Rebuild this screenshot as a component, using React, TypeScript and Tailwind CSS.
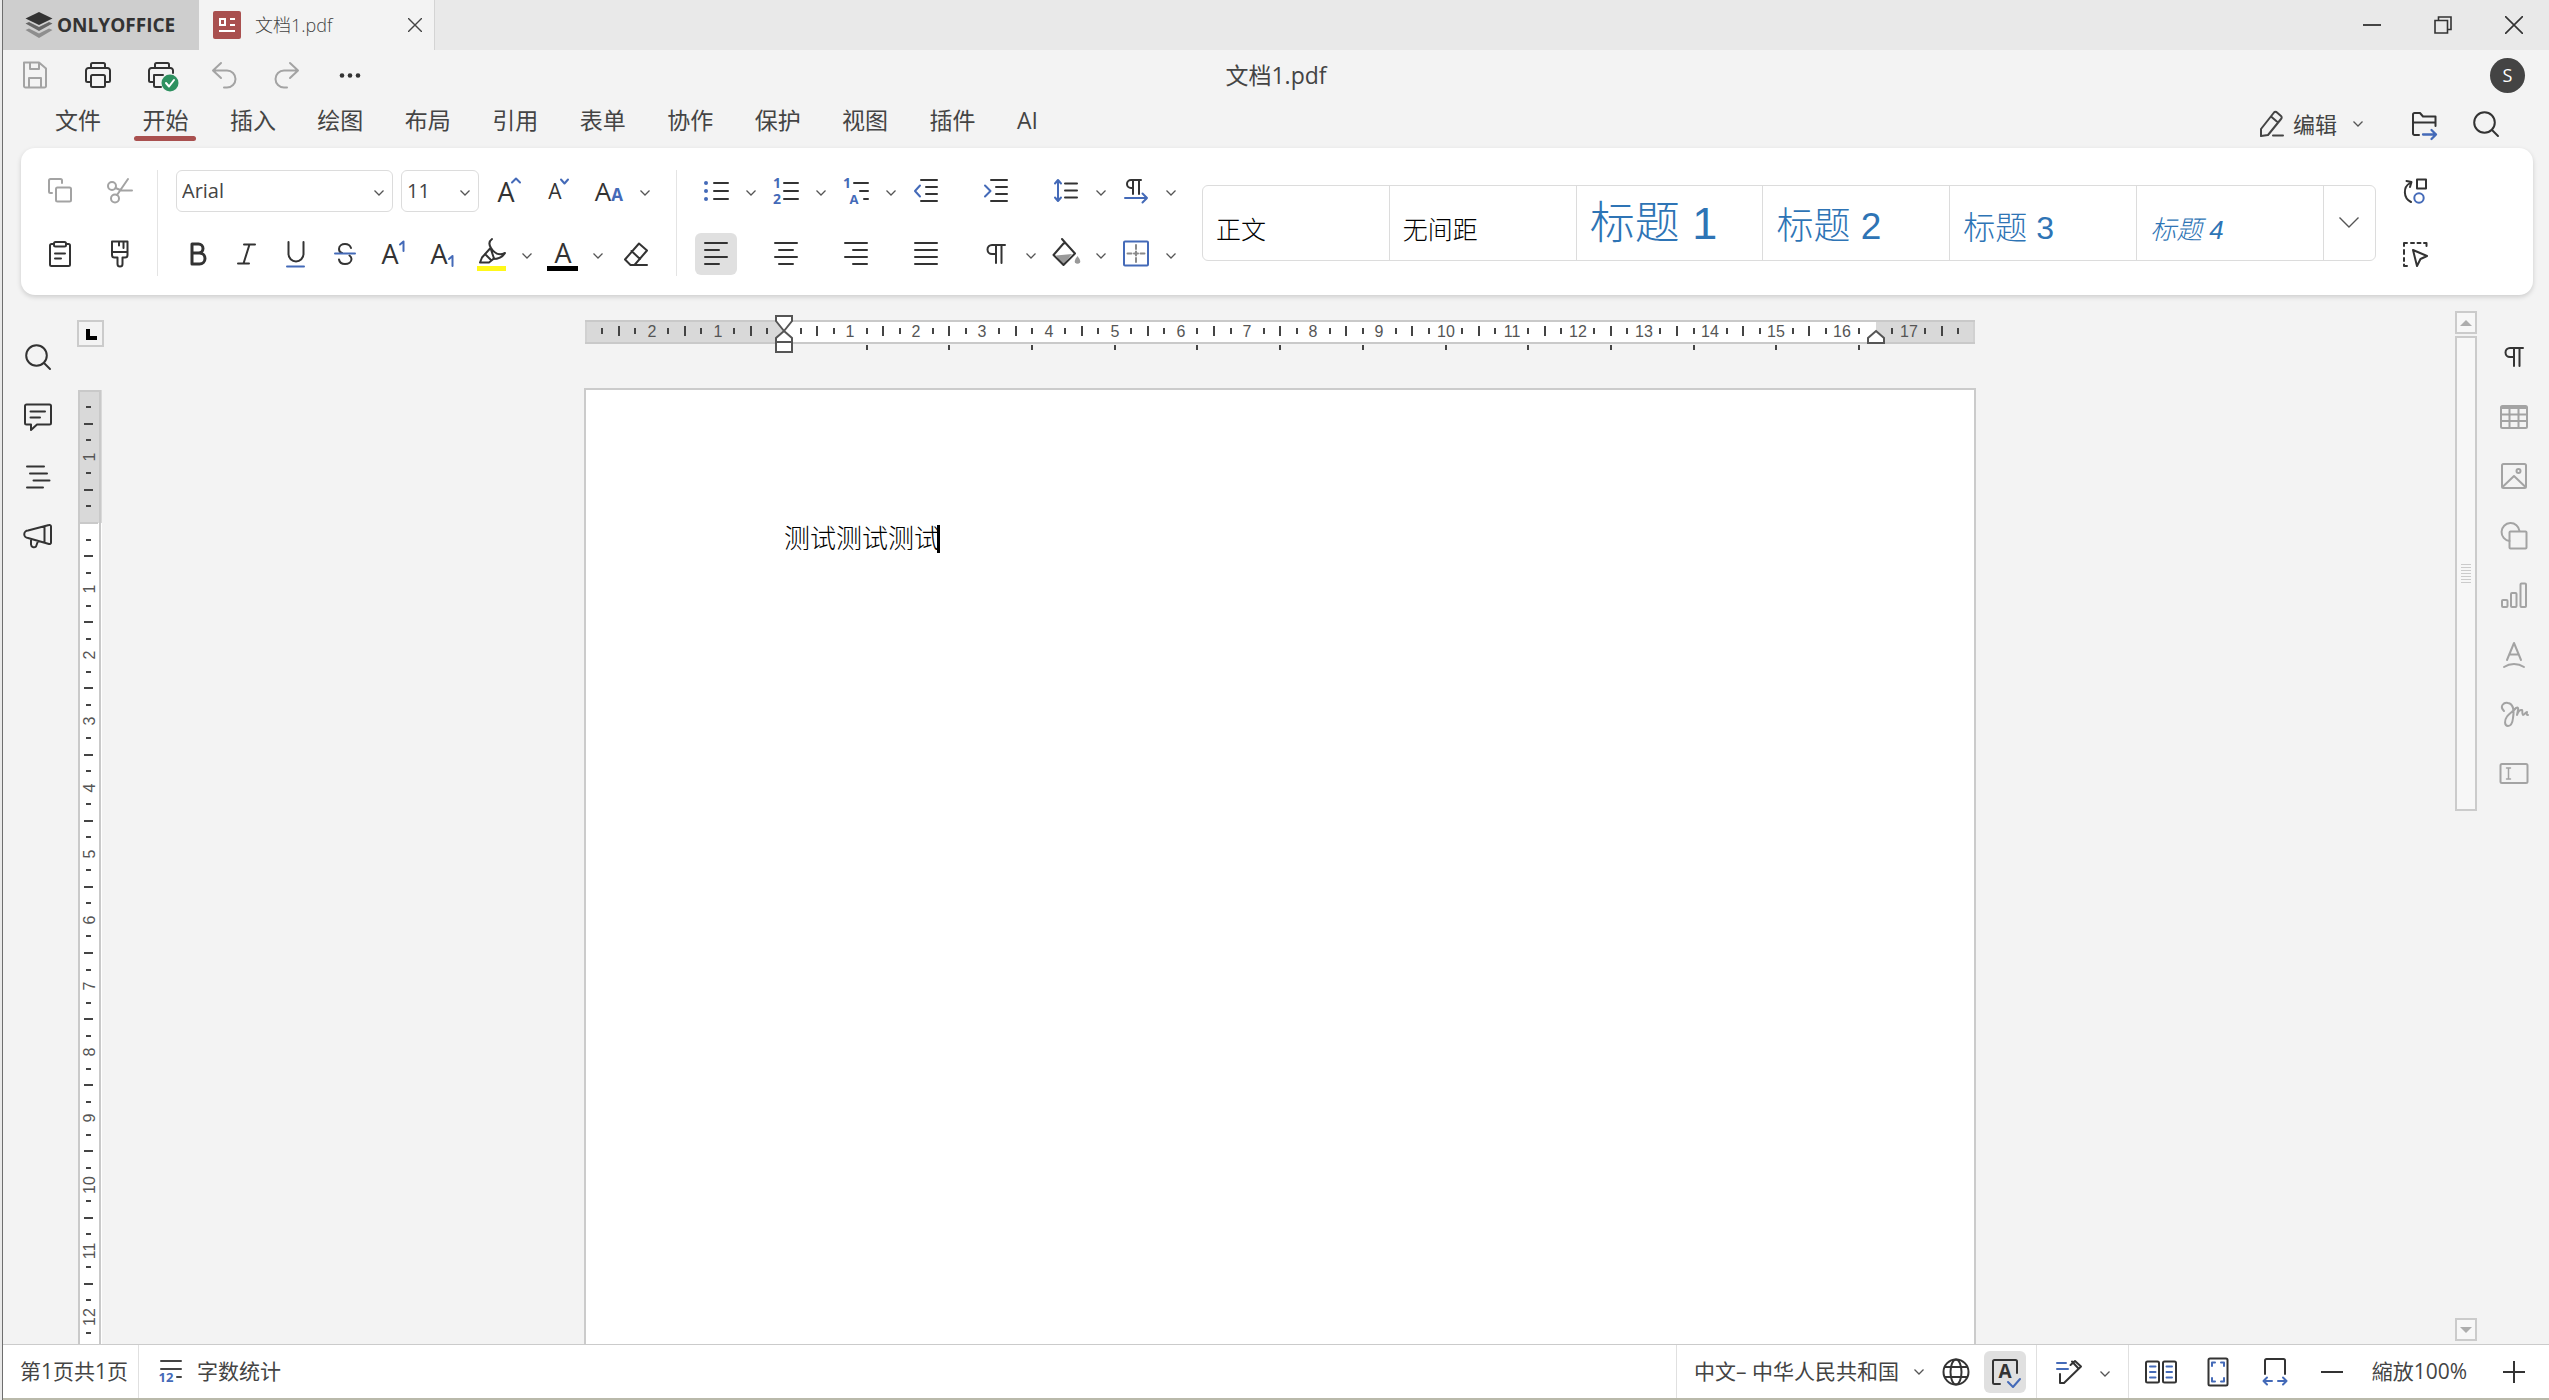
import { useState } from "react";
import type { ReactNode } from "react";

const BLUE = "#446ab8";
const LATIN = "Liberation Sans, sans-serif";

function Icon({ size = 28, children, className = "" }: { size?: number; children: ReactNode; className?: string }) {
  return (
    <svg width={size} height={size} viewBox={`0 0 ${size} ${size}`} fill="none" stroke="currentColor"
      strokeWidth={2} strokeLinecap="round" strokeLinejoin="round" className={`shrink-0 overflow-visible ${className}`} aria-hidden="true">
      {children}
    </svg>
  );
}

function Glyph({ x, y, size, children, color = "currentColor", bold }: {
  x: number; y: number; size: number; children: string; color?: string; bold?: boolean;
}) {
  return (
    <text x={x} y={y} fontSize={size} fill={color} stroke="none" textAnchor="middle"
      fontFamily="Open Sans, sans-serif" fontWeight={bold ? 700 : 400}>
      {children}
    </text>
  );
}

function Chevron({ className = "" }: { className?: string }) {
  return (
    <svg width="10" height="6" viewBox="0 0 10 6" fill="none" stroke="#555" strokeWidth="1.3" className={`shrink-0 ${className}`} aria-hidden="true">
      <path d="M0.5 0.5 5 5 9.5 0.5" />
    </svg>
  );
}

const icons = {
  save: (
    <Icon><path d="M3 1.500h15l7 6V25a1.500 1.500 0 0 1-1.500 1.500h-19A1.500 1.500 0 0 1 3 25zM9 2v6h9V2M8 26V17h12v9" /></Icon>
  ),
  print: (
    <Icon>
      <path d="M7 7V3.500A1.500 1.500 0 0 1 8.500 2h11A1.500 1.500 0 0 1 21 3.500V7M7 21H3.500A1.500 1.500 0 0 1 2 19.500v-10A2.500 2.500 0 0 1 4.500 7h19A2.500 2.500 0 0 1 26 9.500v10a1.500 1.500 0 0 1-1.500 1.500H21" />
      <rect x="7" y="14" width="14" height="12" rx="1.500" />
    </Icon>
  ),
  quickPrint: (
    <Icon>
      <path d="M8 7V3.500A1.500 1.500 0 0 1 9.500 2h11A1.500 1.500 0 0 1 22 3.500V7M7 21H3.500A1.500 1.500 0 0 1 2 19.500v-10A2.500 2.500 0 0 1 4.500 7h19A2.500 2.500 0 0 1 26 9.500V12M14 26H8.500A1.500 1.500 0 0 1 7 24.500V14h9" />
      <circle cx="23" cy="22" r="8.500" fill="#2e9160" stroke="none" />
      <path d="m19 22 3 3.500 5-6.500" stroke="#fff" />
    </Icon>
  ),
  undo: <Icon><path d="M11 2 3 9.500l8 7.500M3.500 9.500H17a8.500 8.500 0 0 1 0 17h-3" /></Icon>,
  redo: <Icon><path d="m17 2 8 7.500-8 7.500M24.500 9.500H11a8.500 8.500 0 0 0 0 17h3" /></Icon>,
  more: (
    <Icon><g fill="currentColor" stroke="none"><circle cx="6" cy="14.500" r="2.300" /><circle cx="14" cy="14.500" r="2.300" /><circle cx="22" cy="14.500" r="2.300" /></g></Icon>
  ),
  copy: (
    <Icon><path d="M6 16H4.500A1.500 1.500 0 0 1 3 14.500v-11A1.500 1.500 0 0 1 4.500 2h10A1.500 1.500 0 0 1 16 3.500V6" /><rect x="10" y="10.500" width="15" height="14" rx="1.500" /></Icon>
  ),
  cut: (
    <Icon><circle cx="6" cy="9" r="4" /><circle cx="9" cy="21.500" r="4" /><path d="M22 2 11 18M9.500 11l6 2.500h10.500" /></Icon>
  ),
  paste: (
    <Icon><path d="M8 4H5.500A1.500 1.500 0 0 0 4 5.500v19A1.500 1.500 0 0 0 5.500 26h17a1.500 1.500 0 0 0 1.500-1.500v-19A1.500 1.500 0 0 0 22.500 4H20M9 13.500h10M9 18.500h6" /><rect x="8" y="2" width="12" height="4.500" rx="1.500" /></Icon>
  ),
  brush: (
    <Icon><path d="M6 1.500h15.500V15a2.500 2.500 0 0 1-2.500 2.500H16.500V24a2.500 2.500 0 0 1-5 0v-6.500H8.500A2.500 2.500 0 0 1 6 15zM6 12h15.500M13 2v3.500M17.500 2v6" /></Icon>
  ),
  fontUp: <Icon><Glyph x={12} y={25} size={27}>A</Glyph><path d="m18 5.500 4-4 4 4" stroke={BLUE} /></Icon>,
  fontDown: <Icon><Glyph x={11} y={22} size={21}>A</Glyph><path d="m17 2.500 3.500 4 3.500-4" stroke={BLUE} /></Icon>,
  fontCase: <Icon><Glyph x={9} y={24} size={26}>A</Glyph><Glyph x={23} y={24} size={17} color={BLUE} bold>A</Glyph></Icon>,
  bold: <Icon><path d="M8 4v20h7.500a5.500 5.500 0 0 0 0-11H8M8 4h6.500a4.500 4.500 0 0 1 0 9" strokeWidth="3" /></Icon>,
  italic: <Icon><path d="M11 4.500h11M5 23.500h11M16.500 4.500l-6 19" /></Icon>,
  underline: <Icon><path d="M6.500 2v12a7.500 7.500 0 0 0 15 0V2" /><path d="M5 26.500h17" stroke={BLUE} /></Icon>,
  strike: <Icon><path d="M20 8c-1-3-3.500-4-6-4-3 0-6 1.500-6 5 0 2 1 3.500 3 4M8 19.500c.5 3 3 4.500 6 4.500 3.500 0 6.500-2 6.500-5 0-1.500-.5-2.500-2-3.500" /><path d="M4 13.500h20" stroke={BLUE} /></Icon>,
  sup: <Icon><Glyph x={10} y={24} size={27}>A</Glyph><path d="m20 4.500 3.500-3V11" stroke={BLUE} /></Icon>,
  sub: <Icon><Glyph x={10} y={24} size={27}>A</Glyph><path d="m20 19 3.500-3v10" stroke={BLUE} /></Icon>,
  highlight: (
    <Icon><path d="M14 -1c-4 3-3 6-1 9 3 5 8 8 14 5-3 5-8 6-12 6M12.500 8 4 17.500l-2 5h9l5-4zM7 14l6 6" /><path d="M-1 28.500h29" stroke="#fff81a" strokeWidth="5" strokeLinecap="butt" /></Icon>
  ),
  fontColor: <Icon><Glyph x={14} y={23} size={27}>A</Glyph><path d="M-2 28.500h31" stroke="#000" strokeWidth="5" strokeLinecap="butt" /></Icon>,
  eraser: <Icon><path d="M17 3.500 25 10.500 12.500 25H8.500L3 19.500zM9.500 11l8.500 8M12.500 25H25" /></Icon>,
  bullets: (
    <Icon><path d="M12 6h14M12 14h14M12 22h14" /><g fill={BLUE} stroke="none"><circle cx="4" cy="6" r="2" /><circle cx="4" cy="14" r="2" /><circle cx="4" cy="22" r="2" /></g></Icon>
  ),
  numbers: <Icon><path d="M12 6h14M12 14h14M12 22h14" /><Glyph x={5} y={11} size={14} color={BLUE} bold>1</Glyph><Glyph x={5} y={27} size={14} color={BLUE} bold>2</Glyph></Icon>,
  multilevel: <Icon><path d="M12 6h14M18 14h8M22 22h4" /><Glyph x={5} y={11} size={14} color={BLUE} bold>1</Glyph><Glyph x={12} y={27} size={13} color={BLUE} bold>A</Glyph></Icon>,
  outdent: <Icon><path d="M9 3h16M14 10h11M14 17h11M9 24h16" /><path d="M8 8.500 3 14l5 5.500" stroke={BLUE} /></Icon>,
  indent: <Icon><path d="M9 3h16M14 10h11M14 17h11M9 24h16" /><path d="m3 8.500 5.500 5.500L3 19.500" stroke={BLUE} /></Icon>,
  spacing: <Icon><path d="M13 6.500h12M13 13.500h12M13 20.500h12" /><path d="M6 3.500v20M3 6.500l3-3.500 3 3.500M3 20.500 6 24l3-3.500" stroke={BLUE} /></Icon>,
  direction: <Icon><path d="M11 17V3M17 17V3M19 3H9a4 4 0 0 0 0 8h2" /><path d="M3 21h22M20.500 16.500 25 21l-4.500 4.500" stroke={BLUE} /></Icon>,
  left: <Icon><path d="M3 3h22M3 10h14M3 17h22M3 24h14" /></Icon>,
  center: <Icon><path d="M3 3h22M7 10h14M3 17h22M7 24h14" /></Icon>,
  right: <Icon><path d="M3 3h22M11 10h14M3 17h22M11 24h14" /></Icon>,
  justify: <Icon><path d="M3 3h22M3 10h22M3 17h22M3 24h22" /></Icon>,
  pilcrow: <Icon><path d="M14 23V5M19.500 23V5M23 5H10a4.500 4.500 0 0 0 0 9h4" /></Icon>,
  bucket: (
    <Icon>
      <path d="M4 15.500 20 14l-7.500 9H9z" fill="#999" stroke="none" />
      <path d="m10-1 3.500 4M11.500 3.500 1.500 15l10 10L23 13.500 13.500 3z" />
      <path d="M25.500 16c3 4 3 5.500 2.500 6.500a3 3 0 0 1-5 0c-.5-1-.5-2.500 2.500-6.500z" fill="#999" stroke="none" />
    </Icon>
  ),
  borders: <Icon><rect x="2" y="1.500" width="24" height="24" rx="1" stroke={BLUE} /><path d="M5.500 13.500h4M18.500 13.500h4M14 5v4M14 18v4M12 13.500h4M14 11.500v4" stroke="#8a8a8a" /></Icon>,
  replace: (
    <Icon><path d="M10 25C2 21 2 10 9 6M5.500 4l5 1-1.500 5" /><rect x="16" y="2.500" width="9" height="9" /><circle cx="18" cy="21" r="4.700" stroke={BLUE} /></Icon>
  ),
  selectTool: (
    <Icon><path d="M3 6V3h3M10 3h3M16.500 3h3M23 3h2.500v3M3 10v4M3 18v3M3 24.500V26h3M12 10l14 6-6.500 3L16 26z" /></Icon>
  ),
  pencil: <Icon><path d="M4 26v-7L17 2.500a2 2 0 0 1 3 0l4 3.500a2 2 0 0 1 0 3L11 25zM14 6.500l7 6M16 25.500h10" /></Icon>,
  folder: <Icon><path d="M9 25H4.500A1.500 1.500 0 0 1 3 23.500v-19A1.500 1.500 0 0 1 4.500 3H10l3 3.500h12.500V16M3 12.500h22" /><path d="M13 24.500h13M21.500 20l4.500 4.500-4.500 4.500" stroke={BLUE} strokeWidth="2.300" /></Icon>,
  search: <Icon><circle cx="12.500" cy="12.500" r="10.300" /><path d="m20 20 6 6" /></Icon>,
  comment: <Icon><path d="M2.500 1.500h23A1.500 1.500 0 0 1 27 3v17a1.500 1.500 0 0 1-1.500 1.500H13L7 27v-5.500H2.500A1.500 1.500 0 0 1 1 20V3a1.500 1.500 0 0 1 1.500-1.500zM6.500 8.500H21M6.500 14.500H16" /></Icon>,
  outline: <Icon><path d="M3 3.500h17M6 10.500h17M9.500 17.500h16M3 24.500h16" /></Icon>,
  megaphone: <Icon><path d="M25 2 4 7.500a3.500 3.500 0 0 0 0 7.500L25 21a1.500 1.500 0 0 0 2-1.500V3.500A1.500 1.500 0 0 0 25 2zM20.500 3.500v16M7 16v5.500a3 3 0 0 0 5 2l2-5.500" /></Icon>,
  table: <Icon><rect x="1" y="3" width="26" height="22" rx="1.500" /><path d="M1 5h26M1 11.500h26M1 18h26M9.500 5v20M18.500 5v20" /></Icon>,
  image: <Icon><rect x="2" y="2" width="24" height="24" rx="1.500" /><circle cx="18.500" cy="9" r="2" /><path d="M3 24.500 14 14l11 10.500" /></Icon>,
  shape: <Icon><path d="M9.500 19A9 9 0 1 1 19.500 9" /><rect x="9.500" y="9.500" width="17" height="17" rx="1" /></Icon>,
  chart: <Icon><rect x="2" y="19" width="5.500" height="7" rx="1" /><rect x="11" y="12" width="5.500" height="14" rx="1" /><rect x="20.500" y="2.500" width="5.500" height="23.500" rx="1" /></Icon>,
  textArt: <Icon><path d="M7 19 14 2l7 17M9.500 13.500h9M4 26c6-4 14-4 20 0" /></Icon>,
  signature: (
    <Icon><path d="M4 11C-1 6 4 2 8 3c6 1 6 9 5 15-.5 5-2.500 8-5 8-4 0-3.500-6-1-9.500 2-3 6-5 9-8.500 2-1 2.500 0 2 2l-1 5c1-3 3-5.500 5-5 1 .5-.5 4 1 5 1.500 0 2-2.500 4-3-.5 2-.5 3 1 3" /></Icon>
  ),
  field: <Icon><rect x="0.500" y="4" width="27" height="19" rx="1.500" /><path d="M6.500 8h4M6.500 19h4M8.500 8v11" strokeWidth="1.500" /></Icon>,
  wordCount: <Icon><path d="M4 3h20M4 11h20M20 19h4" /><Glyph x={9} y={24} size={13} color={BLUE} bold>12</Glyph></Icon>,
  globe: <Icon><circle cx="14" cy="14" r="12.500" /><ellipse cx="14" cy="14" rx="5.500" ry="12.500" /><path d="M3 9h22M3 19h22" /></Icon>,
  spell: <Icon><path d="M26 15V3.500A1.500 1.500 0 0 0 24.500 2h-21A1.500 1.500 0 0 0 2 3.500v21A1.500 1.500 0 0 0 3.500 26H9" /><Glyph x={14} y={20} size={19} bold>A</Glyph><path d="m17 24 5 5 7-8" stroke={BLUE} /></Icon>,
  track: <Icon><path d="M4 16v9h4L25 8.500 19 3l-4.500 4M16 3.500l6.500 7" /><path d="M1 5h9M1 11h11" stroke={BLUE} /></Icon>,
  book: (
    <Icon size={32}>
      <rect x="1" y="5.500" width="13" height="21" rx="1.500" /><rect x="18" y="5.500" width="13" height="21" rx="1.500" />
      <path d="M5 10.500h5.500M5 16h5.500M5 21.500h5.500M21.500 10.500h5.500M21.500 16h5.500M21.500 21.500h5.500" stroke={BLUE} />
    </Icon>
  ),
  fitPage: <Icon><rect x="4.500" y="0.500" width="19" height="27" rx="1.500" /><path d="M8 8V4.500h3M17 4.500h3V8M8 20v3.500h3M17 23.500h3V20" stroke={BLUE} /></Icon>,
  fitWidth: <Icon><path d="M4 16V2.500A1.500 1.500 0 0 1 5.500 1h17A1.500 1.500 0 0 1 24 2.500V16" /><path d="M3 23h8M17 23h8M6 19.500 2.500 23 6 26.500M22 19.500l3.500 3.500-3.500 3.500" stroke={BLUE} /></Icon>,
  minus: <Icon><path d="M3 14h22" strokeLinecap="butt" /></Icon>,
  plus: <Icon><path d="M3 14h22M14 3v22" strokeLinecap="butt" /></Icon>,
};

type IconName = keyof typeof icons;

function IconButton({ icon, label, className = "w-[42px]", muted, onClick, pressed }: {
  icon: IconName; label: string; className?: string; muted?: boolean; onClick?: () => void; pressed?: boolean;
}) {
  return (
    <button type="button" aria-label={label} title={label} onClick={onClick} aria-pressed={pressed}
      className={`flex h-[42px] shrink-0 items-center justify-center rounded-md ${muted ? "text-[#a3a3a3]" : "text-[#333]"} ${pressed ? "bg-[#e0e0e0]" : ""} ${className}`}>
      {icons[icon]}
    </button>
  );
}

function DropButton({ label, className = "w-7" }: { label: string; className?: string }) {
  return (
    <button type="button" aria-label={label} className={`flex h-[42px] shrink-0 items-center justify-center pt-1 ${className}`}>
      <Chevron />
    </button>
  );
}

function TitleBar() {
  return (
    <header className="flex h-[50px] shrink-0 bg-[#e9e9e9]">
      <button type="button" className="flex w-[196px] items-center gap-1 bg-[#cecece] pl-[22px] text-[19px] font-bold text-[#333]">
        <svg width="28" height="28" viewBox="0 0 28 28" aria-hidden="true">
          <path d="M14 1 27.500 7.500 14 14 0.500 7.500z" fill="#333" />
          <path d="M0.500 12.500 4 11l10 5 10-5 3.500 1.500L14 20z" fill="#666" />
          <path d="M0.500 19 4 17.500l10 5 10-5 3.500 1.500L14 27z" fill="#8e8e8e" />
        </svg>
        ONLYOFFICE
      </button>
      <div className="flex w-[236px] items-center border-r border-[#d4d4d4] bg-[#f3f3f3] pl-[14px]">
        <svg width="28" height="28" viewBox="0 0 28 28" aria-hidden="true">
          <rect width="28" height="28" rx="2" fill="#a9504f" />
          <path d="M7 8h5v6H7zM17 8h5M17 14h5M6 20h16" fill="none" stroke="#fff" strokeWidth="2" />
        </svg>
        <span className="ml-[14px] flex-1 text-[18px] text-[#444]">文档1.pdf</span>
        <button type="button" aria-label="关闭标签" className="mr-3 flex size-[14px] items-center justify-center">
          <svg width="14" height="14" viewBox="0 0 14 14" stroke="#444" strokeWidth="1.400" aria-hidden="true"><path d="m0 0 14 14M14 0 0 14" /></svg>
        </button>
      </div>
      <div className="ml-auto flex items-center">
        <button type="button" aria-label="最小化" className="flex h-full w-[71px] items-center justify-center">
          <svg width="18" height="18" viewBox="0 0 18 18" stroke="#333" strokeWidth="1.800" aria-hidden="true"><path d="M0 9h18" /></svg>
        </button>
        <button type="button" aria-label="还原" className="flex h-full w-[71px] items-center justify-center">
          <svg width="18" height="18" viewBox="0 0 18 18" fill="none" stroke="#333" strokeWidth="1.600" aria-hidden="true"><path d="M1 4.500h12.500V17H1zM4.500 4V1H17v12.500h-3" /></svg>
        </button>
        <button type="button" aria-label="关闭" className="flex h-full w-[71px] items-center justify-center">
          <svg width="18" height="18" viewBox="0 0 18 18" stroke="#333" strokeWidth="1.600" aria-hidden="true"><path d="m0 0 18 18M18 0 0 18" /></svg>
        </button>
      </div>
    </header>
  );
}

function QuickBar() {
  return (
    <div className="flex h-[50px] shrink-0 items-center">
      <div className="flex flex-1">
        <IconButton icon="save" label="保存" className="w-[63px]" muted />
        <IconButton icon="print" label="打印" className="w-[63px]" />
        <IconButton icon="quickPrint" label="快速打印" className="w-[63px]" />
        <IconButton icon="undo" label="撤消" className="w-[63px]" muted />
        <IconButton icon="redo" label="重做" className="w-[63px]" muted />
        <IconButton icon="more" label="更多" className="w-[63px]" />
      </div>
      <h1 className="text-[23px] font-normal text-[#444]">文档1.pdf</h1>
      <div className="flex flex-1 justify-end">
        <span className="mr-6 flex size-[35px] items-center justify-center rounded-full bg-[#444] text-lg font-normal text-white">S</span>
      </div>
    </div>
  );
}

const tabs = ["文件", "开始", "插入", "绘图", "布局", "引用", "表单", "协作", "保护", "视图", "插件", "AI"];

function MenuBar() {
  const [active, setActive] = useState("开始");
  return (
    <div className="flex h-12 shrink-0 items-start justify-between">
      <nav className="ml-11 flex w-[999px] justify-between pt-1">
        {tabs.map((tab) => (
          <button key={tab} type="button" onClick={() => setActive(tab)} className="flex flex-col text-[23px] leading-8 font-normal text-[#444]">
            <span className="px-2">{tab}</span>
            <span className={`h-[5px] w-full rounded-sm ${tab === active ? "bg-[#a9504f]" : ""}`} />
          </button>
        ))}
      </nav>
      <div className="flex items-center pt-[3px] pr-[42px]">
        <button type="button" className="flex items-center text-[22px] font-normal text-[#444]">
          {icons.pencil}
          <span className="ml-2">编辑</span>
          <Chevron className="ml-4" />
        </button>
        <IconButton icon="folder" label="打开文件位置" className="ml-10 w-[42px]" />
        <IconButton icon="search" label="搜索" className="ml-5 w-[42px]" />
      </div>
    </div>
  );
}

const paragraphTop: [IconName, string, boolean][] = [
  ["bullets", "项目符号", true], ["numbers", "编号", true], ["multilevel", "多级列表", true],
  ["outdent", "减少缩进", false], ["indent", "增加缩进", false], ["spacing", "行间距", true], ["direction", "文字方向", true],
];
const paragraphBottom: [IconName, string, boolean][] = [
  ["left", "左对齐", false], ["center", "居中", false], ["right", "右对齐", false], ["justify", "两端对齐", false],
  ["pilcrow", "非打印字符", true], ["bucket", "底纹", true], ["borders", "边框", true],
];
const textButtons: [IconName, string][] = [
  ["bold", "粗体"], ["italic", "斜体"], ["underline", "下划线"], ["strike", "删除线"], ["sup", "上标"], ["sub", "下标"],
];

const styles = [
  { name: "正文", cls: "text-[25px] text-black" },
  { name: "无间距", cls: "text-[25px] text-black" },
  { name: "标题 1", cls: "text-[45px] text-[#2e74b5]" },
  { name: "标题 2", cls: "text-[37px] text-[#2e74b5]" },
  { name: "标题 3", cls: "text-[32px] text-[#2e74b5]" },
  { name: "标题 4", cls: "text-[26px] text-[#2e74b5] italic" },
];

function Ribbon() {
  const [align, setAlign] = useState("left");
  const renderParagraph = ([icon, label, drop]: [IconName, string, boolean]) => (
    <div key={icon} className="flex">
      <IconButton icon={icon} label={label} pressed={icon === align || undefined}
        onClick={["left", "center", "right", "justify"].includes(icon) ? () => setAlign(icon) : undefined} />
      {drop && <DropButton label={`${label}选项`} />}
    </div>
  );

  return (
    <section className="mr-4 ml-[18px] flex h-[147px] shrink-0 items-center rounded-[14px] bg-white pt-[2px] pl-[9px] shadow-[0_2px_5px_rgba(0,0,0,0.16)]">
      <div className="grid grid-cols-2 gap-y-[21px]">
        <IconButton icon="copy" label="复制" className="w-[60px]" muted />
        <IconButton icon="cut" label="剪切" className="w-[60px]" muted />
        <IconButton icon="paste" label="粘贴" className="w-[60px]" />
        <IconButton icon="brush" label="复制样式" className="w-[60px]" />
      </div>
      <div className="mr-[15px] ml-[7px] h-[106px] w-px bg-[#e4e4e4]" />

      <div className="flex flex-col gap-[21px]">
        <div className="flex items-center pl-[3px]">
          <label className="relative mr-2 w-[217px]">
            <select aria-label="字体" className="h-[42px] w-full appearance-none rounded-md border border-[#dcdcdc] bg-white pl-[5px] font-['Open_Sans',sans-serif] text-[20px] font-normal text-[#444]">
              <option>Arial</option>
            </select>
            <Chevron className="pointer-events-none absolute top-[20px] right-[9px]" />
          </label>
          <label className="relative mr-1 w-[78px]">
            <select aria-label="字号" className="h-[42px] w-full appearance-none rounded-md border border-[#dcdcdc] bg-white pl-[5px] font-['Open_Sans',sans-serif] text-[20px] font-normal text-[#444]">
              <option>11</option>
            </select>
            <Chevron className="pointer-events-none absolute top-[20px] right-[9px]" />
          </label>
          <IconButton icon="fontUp" label="增大字号" className="w-[50px]" />
          <IconButton icon="fontDown" label="减小字号" className="w-[50px]" />
          <IconButton icon="fontCase" label="更改大小写" className="w-[50px]" />
          <DropButton label="大小写选项" className="w-6" />
        </div>
        <div className="flex">
          {textButtons.map(([icon, label]) => (
            <IconButton key={icon} icon={icon} label={label} className="w-[49px]" />
          ))}
          <IconButton icon="highlight" label="突出显示颜色" className="w-[49px]" />
          <DropButton label="突出显示选项" className="w-[22px]" />
          <IconButton icon="fontColor" label="字体颜色" className="w-[49px]" />
          <DropButton label="字体颜色选项" className="w-[22px]" />
          <IconButton icon="eraser" label="清除样式" className="w-[53px]" />
        </div>
      </div>
      <div className="mr-[18px] ml-[14px] h-[106px] w-px bg-[#e4e4e4]" />

      <div className="grid shrink-0 grid-cols-[repeat(7,70px)] gap-y-[21px]">
        {paragraphTop.map(renderParagraph)}
        {paragraphBottom.map(renderParagraph)}
      </div>

      <div className="ml-[17px] flex h-[76px] min-w-0 flex-1 rounded-md border border-[#dcdcdc]">
        {styles.map((s) => (
          <button key={s.name} type="button" className="flex min-w-0 flex-1 items-baseline border-r border-[#dcdcdc] pl-[13px] font-['Liberation_Sans','Noto_Sans_CJK_SC',sans-serif]">
            <span className="inline-block h-[53px]" />
            <span className={`leading-none whitespace-nowrap ${s.cls}`}>{s.name}</span>
          </button>
        ))}
        <button type="button" aria-label="更多样式" className="flex w-[51px] shrink-0 items-center justify-center">
          <svg width="20" height="11" viewBox="0 0 20 11" fill="none" stroke="#555" strokeWidth="1.400" aria-hidden="true"><path d="m0.500 0.500 9.500 9.500 9.500-9.500" /></svg>
        </button>
      </div>

      <div className="mr-[97px] ml-[18px] flex flex-col gap-[21px]">
        <IconButton icon="replace" label="替换" />
        <IconButton icon="selectTool" label="选择" />
      </div>
    </section>
  );
}

const UNIT = 66.15;
const quarters = (from: number, to: number) => Array.from({ length: (to - from) * 4 + 1 }, (_, i) => from + i / 4);

function HorizontalRuler() {
  const zero = 200;
  const end = 1292;
  return (
    <svg width="1392" height="40" viewBox="0 0 1392 40" className="shrink-0 overflow-visible" aria-hidden="true">
      <rect x="1" y="6" width="1390" height="24" fill="#d9d9d9" />
      <rect x={zero} y="6" width={end - zero} height="24" fill="#fff" />
      <path d="M1 7h1390M1 29h1390" stroke="#c9c9c9" strokeWidth="2" />
      <path d="M2 6v24M1390 6v24" stroke="#c9c9c9" />
      {quarters(-3, 18).map((q) => {
        const x = Math.round(zero + q * UNIT);
        if (q === 0 || q === 16.5 || x < 10 || x > 1380) return null;
        if (Number.isInteger(q)) {
          return <text key={q} x={x} y="23" fontSize="16" fill="#555" textAnchor="middle" fontFamily={LATIN}>{Math.abs(q)}</text>;
        }
        const tall = q % 0.5 === 0;
        return <rect key={q} x={x - 1} y={tall ? 12 : 14} width="2" height={tall ? 10 : 6} fill="#444" />;
      })}
      {Array.from({ length: 13 }, (_, i) => (
        <rect key={i} x={Math.round(zero + (i + 1) * UNIT * 1.25) - 1} y="31" width="2" height="5" fill="#444" />
      ))}
      <g fill="#fff" stroke="#555" strokeWidth="2">
        <path d="M192 2h16v5l-8 10-8-10zM200 17l8 7v4h-16v-4zM192 28h16v10h-16z" />
        <path d={`M${end} 17l8 7v5h-16v-5z`} />
      </g>
    </svg>
  );
}

function VerticalRuler() {
  const zero = 133;
  return (
    <div className="mt-[43px] ml-px min-h-0 w-6 flex-1 overflow-hidden">
      <svg width="24" height="1400" viewBox="0 0 24 1400" aria-hidden="true">
        <rect width="24" height="1400" fill="#fff" />
        <rect width="24" height={zero} fill="#d9d9d9" />
        <path d={`M1 1400V1h21v1399M0 ${zero}h20`} fill="none" stroke="#c9c9c9" strokeWidth="2" />
        {quarters(-2, 13).map((q) => {
          const y = Math.round(zero + q * UNIT);
          if (q === 0 || y < 10 || q > 12.5) return null;
          if (Number.isInteger(q)) {
            return <text key={q} transform={`translate(17 ${y}) rotate(-90)`} fontSize="16" fill="#555" textAnchor="middle" fontFamily={LATIN}>{Math.abs(q)}</text>;
          }
          const wide = q % 0.5 === 0;
          return <rect key={q} x={wide ? 6 : 8} y={y - 1} width={wide ? 9 : 5} height="2" fill="#444" />;
        })}
      </svg>
    </div>
  );
}

function Scrollbar() {
  return (
    <div className="flex w-[22px] shrink-0 flex-col pt-4 pb-[3px]">
      <button type="button" aria-label="向上滚动" className="flex h-[23px] items-center justify-center border-2 border-[#cbcbcb] bg-[#f7f7f7]">
        <svg width="12" height="6" viewBox="0 0 12 6" fill="#adadad" aria-hidden="true"><path d="M6 0l6 6H0z" /></svg>
      </button>
      <div className="mt-[2px] flex h-[475px] items-center justify-center border-2 border-[#cbcbcb] bg-[#f7f7f7]">
        <svg width="10" height="19" viewBox="0 0 10 19" stroke="#cbcbcb" aria-hidden="true"><path d="M0 .5h10M0 3.500h10M0 6.500h10M0 9.500h10M0 12.500h10M0 15.500h10M0 18.500h10" /></svg>
      </div>
      <button type="button" aria-label="向下滚动" className="mt-auto flex h-[23px] items-center justify-center border-2 border-[#cbcbcb] bg-[#f7f7f7]">
        <svg width="12" height="6" viewBox="0 0 12 6" fill="#adadad" aria-hidden="true"><path d="M0 0h12L6 6z" /></svg>
      </button>
    </div>
  );
}

const leftTools: [IconName, string][] = [["search", "查找"], ["comment", "批注"], ["outline", "标题"], ["megaphone", "反馈和支持"]];
const rightTools: [IconName, string][] = [
  ["pilcrow", "段落设置"], ["table", "表格设置"], ["image", "图像设置"], ["shape", "形状设置"],
  ["chart", "图表设置"], ["textArt", "艺术字设置"], ["signature", "签名设置"], ["field", "表单设置"],
];

function Workspace() {
  return (
    <div className="flex min-h-0 flex-1 overflow-hidden">
      <aside className="flex w-[74px] shrink-0 flex-col gap-[18px] pt-[41px] pl-[14px]">
        {leftTools.map(([icon, label]) => <IconButton key={icon} icon={icon} label={label} />)}
      </aside>
      <div className="flex w-[27px] shrink-0 flex-col pt-[25px]">
        <button type="button" aria-label="制表符" className="h-[27px] w-[27px] border-2 border-[#cbcbcb]">
          <svg width="23" height="23" viewBox="0 0 23 23" aria-hidden="true"><path d="M9 7v9h9" fill="none" stroke="#000" strokeWidth="4" /></svg>
        </button>
        <VerticalRuler />
      </div>
      <main className="flex min-w-0 flex-1 flex-col items-center pt-[19px] pl-px">
        <HorizontalRuler />
        <article className="mt-[34px] w-[1392px] flex-1 border-2 border-b-0 border-[#cbcbcb] bg-white px-[198px] pt-[131px]">
          <p className="flex items-center font-['Liberation_Sans','Noto_Sans_CJK_SC',sans-serif] text-[26px] leading-9 text-black">
            测试测试测试
            <span className="-ml-[3px] h-7 w-[3px] bg-black" />
          </p>
        </article>
      </main>
      <Scrollbar />
      <aside className="flex h-[500px] w-[72px] shrink-0 flex-col items-center justify-between pt-[41px] pl-[2px]">
        {rightTools.map(([icon, label], i) => <IconButton key={icon} icon={icon} label={label} muted={i > 0} />)}
      </aside>
    </div>
  );
}

function StatusBar() {
  const [zoom, setZoom] = useState(100);
  return (
    <footer className="flex h-14 shrink-0 items-center border-t border-b-2 border-t-[#cbcbcb] border-b-[#b9b9aa] bg-white text-[21px] font-normal text-[#444]">
      <span className="pl-[17px]">第1页共1页</span>
      <div className="ml-[10px] h-full w-px bg-[#e0e0e0]" />
      <button type="button" className="ml-[18px] flex items-center gap-3">{icons.wordCount}字数统计</button>
      <div className="ml-auto h-full w-px bg-[#e0e0e0]" />
      <label className="relative ml-[17px] flex items-center">
        <select aria-label="文本语言" className="appearance-none bg-transparent pr-8 text-[#444]">
          <option>中文– 中华人民共和国</option>
        </select>
        <Chevron className="pointer-events-none absolute right-[7px]" />
      </label>
      <IconButton icon="globe" label="设置文档语言" className="ml-1 w-[42px]" />
      <IconButton icon="spell" label="拼写检查" className="ml-[7px] w-[42px]" pressed />
      <div className="ml-[10px] h-full w-px bg-[#e0e0e0]" />
      <IconButton icon="track" label="修订" className="ml-3 w-[42px]" />
      <DropButton label="修订选项" />
      <div className="ml-[9px] h-full w-px bg-[#e0e0e0]" />
      <IconButton icon="book" label="多页" className="ml-[3px] w-[57px]" />
      <IconButton icon="fitPage" label="适合页面" className="w-[57px]" />
      <IconButton icon="fitWidth" label="适合宽度" className="w-[57px]" />
      <IconButton icon="minus" label="缩小" className="w-[57px]" onClick={() => setZoom(Math.max(10, zoom - 10))} />
      <button type="button" className="w-[119px] text-center whitespace-nowrap">縮放{zoom}%</button>
      <IconButton icon="plus" label="放大" className="w-[70px]" onClick={() => setZoom(zoom + 10)} />
    </footer>
  );
}

export default function App() {
  return (
    <div className="h-screen bg-[#e9e9e9] pl-[2px]">
      <div className="flex h-full flex-col overflow-hidden border-l border-[#6e6e6e] bg-[#f3f3f3] font-['Open_Sans','Noto_Sans_CJK_SC',sans-serif] font-light">
        <TitleBar />
        <QuickBar />
        <MenuBar />
        <Ribbon />
        <Workspace />
        <StatusBar />
      </div>
    </div>
  );
}
